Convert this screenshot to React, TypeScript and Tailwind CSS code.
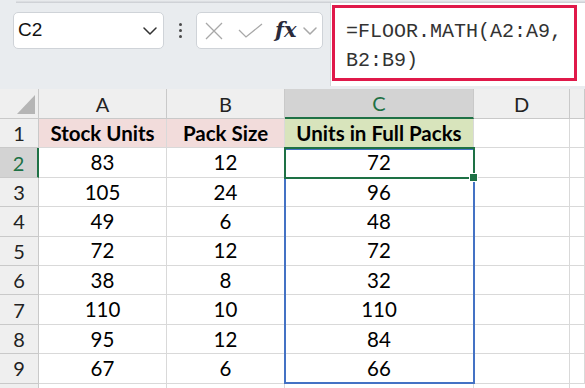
import React from "react";

const data: number[][] = [
  [83, 12, 72],
  [105, 24, 96],
  [49, 6, 48],
  [72, 12, 72],
  [38, 8, 32],
  [110, 10, 110],
  [95, 12, 84],
  [67, 6, 66],
];

function Chevron({ className }: { className?: string }) {
  return (
    <svg width="14" height="8" viewBox="0 0 14 8" className={className} fill="none">
      <path d="M1 1 L7 7 L13 1" stroke="currentColor" strokeWidth="1.5" strokeLinejoin="round" strokeLinecap="round" />
    </svg>
  );
}

export default function App() {
  const hdr =
    "bg-[#efefef] border-r border-b border-[#c9c9c9] flex items-center justify-center text-[20px] text-[#222]";
  const cell =
    "border-r border-b border-[#d9d9d9] flex items-center justify-center text-[20.5px] text-black";
  return (
    <div className="w-[585px] h-[388px] overflow-hidden bg-white font-['Lato',sans-serif]">
      {/* Top bar */}
      <div className="h-[89px] bg-[#e9ecef] flex flex-col">
        <div className="h-[3px] bg-[linear-gradient(#eef0f2,#c9ccd1)] ml-[16px]" />
        <div className="flex flex-1">
          <div className="flex items-start pt-[9px] pl-[13px]">
            <div className="w-[151px] h-[37px] rounded-[5px] border border-[#cfd3d8] bg-white flex items-center justify-between pl-[4px] pr-[6px]">
              <span className="font-['Liberation_Sans',sans-serif] text-[19px] text-[#111]">C2</span>
              <Chevron className="text-[#333]" />
            </div>
            <div className="w-[32px] h-[37px] flex flex-col items-center justify-center gap-[3px]">
              <div className="w-[3px] h-[3px] rounded-full bg-[#4a4a4a]" />
              <div className="w-[3px] h-[3px] rounded-full bg-[#4a4a4a]" />
              <div className="w-[3px] h-[3px] rounded-full bg-[#4a4a4a]" />
            </div>
            <div className="w-[127px] h-[37px] rounded-[5px] border border-[#cfd3d8] bg-white flex items-center pl-[8px]">
              <svg width="18" height="18" viewBox="0 0 18 18" fill="none">
                <path d="M1 1 L17 17 M17 1 L1 17" stroke="#a8a8a8" strokeWidth="1.3" />
              </svg>
              <svg width="25" height="15" viewBox="0 0 25 15" fill="none" className="ml-[15px]">
                <path d="M1 7 L8 14 L24 1" stroke="#a8a8a8" strokeWidth="1.3" />
              </svg>
              <span className="ml-[12px] font-['DejaVu_Serif',serif] italic font-bold text-[21px] text-[#2a2a3a] leading-none -mt-[3px]">fx</span>
              <Chevron className="ml-[6px] text-[#a8a8a8]" />
            </div>
          </div>
          <div className="ml-[7px] mt-0 h-[83px] flex-1 bg-white border-l border-[#d2d5d9]">
            <div className="ml-[1px] mt-[2px] w-[245px] h-[76px] border-[3px] border-[#e0194a] pl-[11px] pt-[9px] font-['Liberation_Mono',monospace] text-[20px] leading-[29px] text-[#333]">
              <div>=FLOOR.MATH(A2:A9,</div>
              <div>B2:B9)</div>
            </div>
          </div>
        </div>
      </div>

      {/* Grid */}
      <div className="relative">
        <div className="grid grid-cols-[39px_128px_118px_189px_96px_1fr] grid-rows-[30px_repeat(9,29.4px)_1fr] h-[299px]">
          {/* header row */}
          <div className={hdr + " relative"}>
            <svg width="39" height="30" viewBox="0 0 39 30" className="absolute inset-0">
              <path d="M35 6 L35 25 L17 25 Z" fill="#b5b5b5" />
            </svg>
          </div>
          <div className={hdr}>A</div>
          <div className={hdr}>B</div>
          <div className="bg-[#d3d3d3] border-r border-[#c9c9c9] border-b-2 border-b-[#1e7145] flex items-center justify-center text-[20px] text-[#1e7145]">
            C
          </div>
          <div className={hdr}>D</div>
          <div className={hdr}></div>

          {/* row 1 */}
          <div className={hdr}>1</div>
          <div className={cell + " bg-[#f2dcdb] font-bold"}>Stock Units</div>
          <div className={cell + " bg-[#f2dcdb] font-bold"}>Pack Size</div>
          <div className={cell + " bg-[#d8e4bc] font-bold"}>Units in Full Packs</div>
          <div className={cell}></div>
          <div className={cell}></div>

          {data.map((r, i) => (
            <React.Fragment key={i}>
              {i === 0 ? (
                <div className="bg-[#d3d3d3] border-b border-[#c9c9c9] border-r-2 border-r-[#1e7145] flex items-center justify-center text-[20px] text-[#1e7145]">
                  2
                </div>
              ) : (
                <div className={hdr}>{i + 2}</div>
              )}
              <div className={cell}>{r[0]}</div>
              <div className={cell}>{r[1]}</div>
              <div className={cell}>{r[2]}</div>
              <div className={cell}></div>
              <div className={cell}></div>
            </React.Fragment>
          ))}

          {/* partial row 10 */}
          <div className="bg-[#efefef] border-r border-[#c9c9c9]"></div>
          <div className="border-r border-[#d9d9d9]"></div>
          <div className="border-r border-[#d9d9d9]"></div>
          <div className="border-r border-[#d9d9d9]"></div>
          <div className="border-r border-[#d9d9d9]"></div>
          <div></div>
        </div>

        {/* selection overlays */}
        <div className="absolute left-[284px] top-[59px] w-[191px] h-[236px] border-2 border-[#4472c4] pointer-events-none" />
        <div className="absolute left-[284px] top-[58px] w-[191px] h-[32px] border-2 border-[#1e7145] pointer-events-none" />
        <div className="absolute left-[469px] top-[84px] w-[9px] h-[9px] bg-[#1e7145] border border-white pointer-events-none" />
      </div>
    </div>
  );
}
